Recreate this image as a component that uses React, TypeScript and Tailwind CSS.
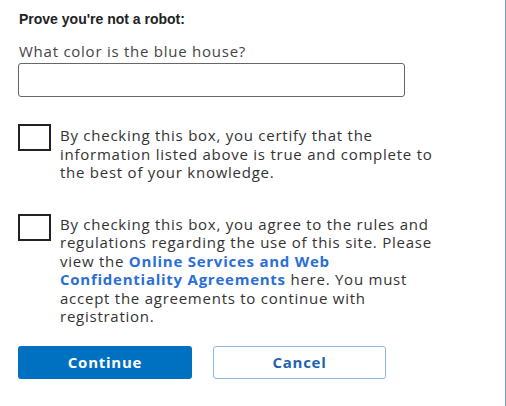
export default function App() {
  return (
    <div className="flex h-[406px] w-[506px] bg-white">
      <div className="flex flex-1 flex-col pl-[18px] pt-[11px] font-['Open_Sans',sans-serif] text-[15px] tracking-[0.75px] text-[#333]">
        <h1 className="pl-px font-['Liberation_Sans',Arial,sans-serif] text-[14px] font-bold leading-[16px] tracking-normal text-[#222]">
          Prove you're not a robot:
        </h1>

        <label className="mt-[14.5px] pl-px leading-[18.5px] text-[#444]">
          What color is the blue house?
        </label>
        <input
          type="text"
          className="mt-[3px] h-[34px] w-[387px] rounded-[3px] border border-[#666] bg-white px-2 outline-none"
        />

        <div className="mt-[27px] flex gap-[9px]">
          <span className="h-[27px] w-[33px] shrink-0 border-2 border-[#222] bg-white" />
          <p className="mt-[2px] w-[382px] leading-[18.5px]">
            By checking this box, you certify that the information listed above is true and complete to the best of
            your knowledge.
          </p>
        </div>

        <div className="mt-[32px] flex gap-[9px]">
          <span className="h-[27px] w-[33px] shrink-0 border-2 border-[#222] bg-white" />
          <p className="mt-[1px] w-[382px] leading-[18.5px]">
            By checking this box, you agree to the rules and regulations regarding the use of this site. Please view the{" "}
            <a className="font-bold text-[#2b6fd4]">Online Services and Web Confidentiality Agreements</a> here. You must
            accept the agreements to continue with registration.
          </p>
        </div>

        <div className="mt-[20px] flex gap-[21px]">
          <button className="h-[33px] w-[174px] rounded-[3px] bg-[#0070c0] text-[15px] font-bold text-white">
            Continue
          </button>
          <button className="h-[33px] w-[173px] rounded-[3px] border border-[#8fb8e0] bg-white text-[15px] font-bold text-[#1f63b0]">
            Cancel
          </button>
        </div>
      </div>
      <div className="w-px bg-[#6b9ad1]" />
    </div>
  );
}
